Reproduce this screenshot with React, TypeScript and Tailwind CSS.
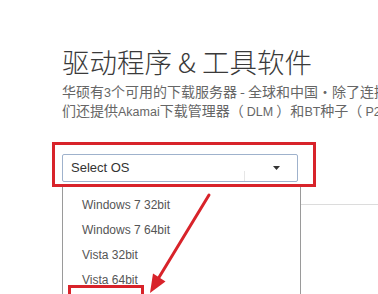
const osList = ['Windows 7 32bit', 'Windows 7 64bit', 'Vista 32bit', 'Vista 64bit', 'Windows 8 32bit', 'Windows 8 64bit']

// latin runs inside the chinese text render narrower in the original
function L({ children }: { children: React.ReactNode }) {
  return (
    <span className="text-[12.5px]" style={{ fontFamily: '"Liberation Sans", Arial, sans-serif' }}>
      {children}
    </span>
  )
}

export default function App() {
  return (
    <div className="relative w-[378px] h-[294px] overflow-hidden bg-white">
      {/* Header */}
      <div className="pl-[62px] pt-[44px] overflow-hidden">
        <h1
          className="text-[27.5px] leading-[34px] font-light text-[#3a3a3a] whitespace-nowrap"
          style={{ fontFamily: '"Noto Sans CJK SC", sans-serif' }}
        >
          驱动程序 &amp; 工具软件
        </h1>
        <div
          className="mt-[5px] text-[14px] leading-[17px] text-[#666] whitespace-nowrap"
          style={{ fontFamily: '"Noto Sans CJK SC", sans-serif' }}
        >
          <div>
            华硕有<L>3</L>个可用的下载服务器 - 全球和中国・除了连接到
          </div>
          <div>
            们还提供<L>Akamai</L>下载管理器（ <L>DLM</L> ）和<L>BT</L>种子（ <L>P2P</L> ）
          </div>
        </div>
      </div>

      {/* Select */}
      <div className="pl-[62px] mt-[33px]" style={{ fontFamily: '"Liberation Sans", Arial, sans-serif' }}>
        <div className="flex items-center w-[236px] h-[28px] border border-[#9fb2cc] rounded-[2px] bg-white pl-[8px] pr-[17px]">
          <span className="flex-1 text-[13px] text-[#333]">Select OS</span>
          <span className="self-end w-px h-[10px] bg-[#e6e6e6]" />
          <svg width="7" height="4" viewBox="0 0 7 4" className="ml-[28px]">
            <path d="M0 0h7L3.5 4z" fill="#333" />
          </svg>
        </div>
      </div>

      {/* Dropdown + page rule */}
      <div className="flex pl-[62px] mt-[4px]" style={{ fontFamily: '"Liberation Sans", Arial, sans-serif' }}>
        <ul className="w-[239px] h-[200px] border border-[#9a9a9a] bg-white pt-[5px]">
          {osList.map((os) => (
            <li key={os} className="h-[25px] flex items-center pl-[19px] text-[12px] text-[#555]">
              {os}
            </li>
          ))}
        </ul>
        <div className="flex-1 mt-[18px] border-t border-[#dcdcdc]" />
      </div>

      {/* Annotations */}
      <div className="absolute left-[52px] top-[142px] w-[264px] h-[45px] border-[3px] border-[#d8232a]" />
      <div className="absolute left-[68px] top-[285px] w-[76px] h-[20px] border-[3px] border-[#d8232a]" />
      <svg className="absolute left-0 top-0" width="378" height="294" viewBox="0 0 378 294">
        <line x1="209" y1="195" x2="158" y2="279" stroke="#d8232a" strokeWidth="3" strokeLinecap="round" />
        <polygon points="150,293 165.5,281.5 153,273.5" fill="#d8232a" />
      </svg>
    </div>
  )
}
